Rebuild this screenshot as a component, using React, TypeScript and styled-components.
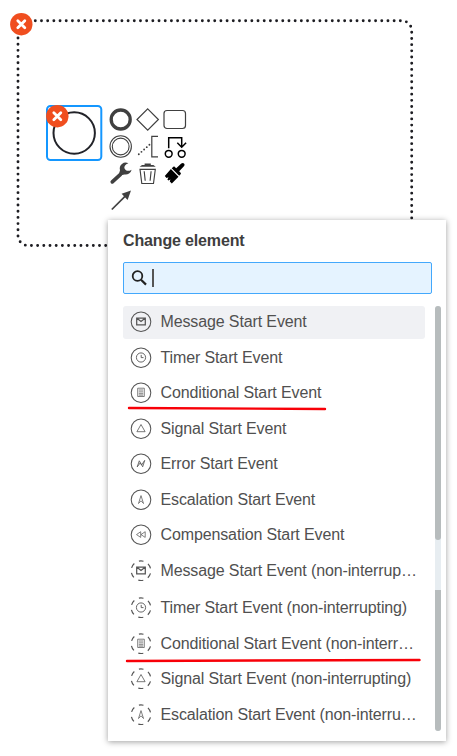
import React from "react";
import styled, { createGlobalStyle } from "styled-components";

const GlobalStyle = createGlobalStyle`
  * { box-sizing: border-box; }
  body { margin: 0; background: #fff; font-family: "Liberation Sans", Arial, sans-serif; overflow: hidden; }
`;

const Canvas = styled.main`
  position: relative;
  width: 457px;
  height: 756px;
  background: #fff;
  overflow: hidden;
`;

const Diagram = styled.svg`
  position: absolute;
  inset: 0;
`;

const ContextPad = styled.div`
  position: absolute;
  left: 107px;
  top: 106px;
  display: grid;
  grid-template-columns: repeat(3, 27px);
  grid-auto-rows: 27px;
`;

const PadIcon = styled.svg`
  display: block;
  width: 27px;
  height: 27px;
  overflow: visible;
  fill: none;
  stroke: #404040;
  stroke-width: 1.2;
`;

const Menu = styled.section`
  position: absolute;
  left: 108px;
  top: 220px;
  width: 338px;
  height: 521px;
  padding: 11px 5px 10px 15px;
  display: flex;
  flex-direction: column;
  background: #fff;
  box-shadow: 0 1px 6px rgba(0, 0, 0, 0.38);
`;

const Title = styled.h1`
  margin: 0;
  height: 31px;
  font-size: 16px;
  line-height: 20px;
  letter-spacing: -0.15px;
  color: #3e3e3e;
`;

const Search = styled.div`
  width: 309px;
  height: 32px;
  display: flex;
  align-items: center;
  padding-left: 7px;
  gap: 4px;
  border: 1px solid #43a8fc;
  border-radius: 2px;
  background: #e5f3ff;
`;

const SearchIcon = styled.svg`
  width: 17px;
  height: 18px;
`;

const Caret = styled.span`
  width: 1.5px;
  height: 18px;
  background: #555;
`;

const Body = styled.div`
  display: flex;
  justify-content: space-between;
  margin-top: 12px;
  height: 425px;
`;

const List = styled.ul`
  list-style: none;
  margin: 0;
  padding: 0;
  width: 302px;
`;

const Row = styled.li<{ $active?: boolean; $height: number }>`
  position: relative;
  height: ${(p) => p.$height}px;
  &::before {
    content: "";
    position: absolute;
    inset: 0 0 auto;
    height: 33px;
    border-radius: 3px;
    background: ${(p) => (p.$active ? "#f0f1f4" : "transparent")};
  }
`;

const RowContent = styled.div`
  position: relative;
  height: 31px;
  display: flex;
  align-items: center;
  gap: 8.5px;
  padding-left: 7px;
`;

const EventSvg = styled.svg`
  flex: none;
  width: 22px;
  height: 22px;
  fill: none;
  stroke: #555;
  stroke-width: 1;
`;

const Label = styled.span`
  white-space: nowrap;
  font-size: 16px;
  line-height: 22px;
  letter-spacing: -0.125px;
  color: #505050;
`;

const Underline = styled.svg<{ $left: number }>`
  position: absolute;
  left: ${(p) => p.$left}px;
  top: 29px;
  width: 300px;
  height: 6px;
  overflow: visible;
  z-index: 1;
`;

const Scrollbar = styled.div`
  width: 6px;
  display: flex;
  flex-direction: column;
  justify-content: space-between;
  background: #e7edf1;
  border-radius: 3px;
`;

const Thumb = styled.div<{ $height: number; $radius: string }>`
  height: ${(p) => p.$height}px;
  border-radius: ${(p) => p.$radius};
  background: #b7bcbd;
`;

type Kind = "message" | "timer" | "condition" | "signal" | "error" | "escalation" | "compensation";

const glyphs: Record<Kind, React.ReactNode> = {
  message: <path d="M6.7 7.3h8.6v6.8H6.7zM6.9 7.6 11 10.8l4.1-3.2" strokeWidth="1.25" />,
  timer: (
    <>
      <circle cx="11" cy="10.8" r="4.6" strokeWidth="0.9" />
      <path d="M11.2 8.2v2.7h2.3" strokeWidth="0.9" />
    </>
  ),
  condition: <path d="M7.7 6.5h6.6v8.3H7.7zM8.8 8.3h4.4M8.8 10.2h4.4M8.8 12h4.4M8.8 13.4h4.4" strokeWidth="0.75" />,
  signal: <path d="m11 6.8 4.1 7.2H6.9z" strokeWidth="0.8" />,
  error: <path d="m7.2 14.2 2.1-6.1 2.3 4.2 3.1-4.6-2 6.4-2.4-4z" strokeWidth="0.85" />,
  escalation: <path d="m11 6.9 2.5 7.9-2.5-2.7-2.5 2.7z" strokeWidth="0.75" />,
  compensation: <path d="m10.7 8-4.2 2.9 4.2 2.8zM15.2 8 11 10.9l4.2 2.8z" strokeWidth="0.75" />,
};

const EventIcon = ({ kind, dashed }: { kind: Kind; dashed?: boolean }) => (
  <EventSvg viewBox="0 0.3 22 22">
    <circle
      cx="11"
      cy="11"
      r="9.8"
      strokeWidth={dashed ? 1.2 : 1.05}
      strokeDasharray={dashed ? "5.1 5.163" : undefined}
      strokeDashoffset={dashed ? 2.55 : undefined}
      transform="rotate(-90 11 11)"
    />
    {glyphs[kind]}
  </EventSvg>
);

const ErrorBadge = ({ x, y }: { x: number; y: number }) => (
  <g transform={`translate(${x} ${y})`}>
    <circle r="11.2" fill="#f04e1f" />
    <path d="m-3.5-3.5 7 7m0-7-7 7" stroke="#fff" strokeWidth="2.8" strokeLinecap="round" />
  </g>
);

interface Item {
  kind: Kind;
  text: string;
  height: number;
  dashed?: boolean;
  active?: boolean;
  mark?: { left: number; width: number; y1: number; y2: number };
}

const items: Item[] = [
  { kind: "message", text: "Message Start Event", height: 36, active: true },
  { kind: "timer", text: "Timer Start Event", height: 35 },
  { kind: "condition", text: "Conditional Start Event", height: 36, mark: { left: 5, width: 197, y1: 2, y2: 3 } },
  { kind: "signal", text: "Signal Start Event", height: 35 },
  { kind: "error", text: "Error Start Event", height: 36 },
  { kind: "escalation", text: "Escalation Start Event", height: 35 },
  { kind: "compensation", text: "Compensation Start Event", height: 36 },
  { kind: "message", text: "Message Start Event (non-interrup…", height: 37, dashed: true },
  { kind: "timer", text: "Timer Start Event (non-interrupting)", height: 36, dashed: true },
  { kind: "condition", text: "Conditional Start Event (non-interr…", height: 35, dashed: true, mark: { left: 3, width: 293.5, y1: 4, y2: 3 } },
  { kind: "signal", text: "Signal Start Event (non-interrupting)", height: 36, dashed: true },
  { kind: "escalation", text: "Escalation Start Event (non-interru…", height: 33, dashed: true },
];

export default function App() {
  return (
    <Canvas>
      <GlobalStyle />
      <Diagram width="457" height="756" fill="none">
        <g stroke="#1d1d22" strokeWidth="2.9" strokeLinecap="round" strokeDasharray="0 6.187">
          <path d="M35.3 20.7H401.7a10 10 0 0 1 10 10V225" />
          <path d="M18 38V235.5a10 10 0 0 0 10 10H115" />
        </g>
        <rect x="47" y="106" width="54.3" height="54" rx="3.5" stroke="#1497ff" strokeWidth="2" />
        <circle cx="74.2" cy="133" r="20.7" stroke="#222329" strokeWidth="2" />
        <ErrorBadge x={21.3} y={24.2} />
        <ErrorBadge x={57.3} y={116.2} />
      </Diagram>
      <ContextPad>
        <PadIcon viewBox="0 0 27 27">
          <circle cx="13.7" cy="13.5" r="9.5" strokeWidth="3.3" />
        </PadIcon>
        <PadIcon viewBox="0 0 27 27">
          <path d="m13.7 2.8 10.7 10.7-10.7 10.7L3 13.5z" />
        </PadIcon>
        <PadIcon viewBox="0 0 27 27">
          <rect x="3" y="4.5" width="21.5" height="18" rx="3" />
        </PadIcon>
        <PadIcon viewBox="0 0 27 27">
          <circle cx="13.7" cy="13.5" r="10.7" strokeWidth="1.1" />
          <circle cx="13.7" cy="13.5" r="8.4" strokeWidth="1.1" />
        </PadIcon>
        <PadIcon viewBox="0 0 27 27">
          <path d="M24 3.3h-6.2v20.6H24" />
          <path d="m4.8 21.2 10.7-9.5" strokeWidth="1.9" strokeLinecap="round" strokeDasharray="0 3.55" />
        </PadIcon>
        <PadIcon viewBox="0 0 27 27">
          <g stroke="#000" strokeWidth="1.5">
            <circle cx="7.7" cy="20.8" r="3.4" />
            <circle cx="20.7" cy="20.8" r="3.4" />
            <path d="M7.7 15.2V4.7h13v9.3m-4.4-4.2 4.4 4.4 4.4-4.4" />
          </g>
        </PadIcon>
        <PadIcon viewBox="0 0 27 27">
          <path d="m5.3 21.9 8.2-7.6" strokeWidth="3.7" strokeLinecap="round" />
          <path d="M21.4 3.2a6 6 0 0 0-8.4 7l-.8 3.1 1.8 2 3.5-.9a6 6 0 0 0 7.1-4.7c-3.1 2-6 1.2-6.9-.9-1-2.2.5-4.5 3.7-5.6z" fill="#404040" stroke="none" />
        </PadIcon>
        <PadIcon viewBox="0 0 27 27">
          <path d="M5.7 6.8 8 4.9h2.6V3.5h6.2v1.4h2.6l2.3 1.9z" fill="#404040" stroke="none" />
          <path d="M6 9.3h15.3l-1.8 14.2H7.8zM10.2 11.3l1 9.5m5.9-9.5-1 9.5" strokeWidth="1.15" />
        </PadIcon>
        <PadIcon viewBox="0 0 27 27">
          <g fill="#000" stroke="none">
            <path d="M12.2 6.9c.6-.5 1.1-.5 1.6 0l1.4 1.4 5.1-4.7c1-1 2-.9 2.7-.1.8.8.8 1.8-.1 2.7l-4.7 5.1 1.4 1.4c.5.5.5 1 0 1.6l-1.4 1.5-7.5-7.5z" />
            <path d="m9.9 9.1 7.6 7.6-6.7 6.8-2-2.1.6-2-2 1.1-1-1.1 1.1-2.1-2 .6-1.7-1.9z" />
          </g>
        </PadIcon>
        <PadIcon viewBox="0 0 27 27">
          <path d="M4.8 22.5 18.5 8.8" strokeWidth="1.7" />
          <path d="m24 3.4-3.4 9.5-6-6.1z" fill="#404040" stroke="none" />
        </PadIcon>
      </ContextPad>
      <Menu>
        <Title>Change element</Title>
        <Search>
          <SearchIcon viewBox="0 0 17 18" fill="none" stroke="#222">
            <circle cx="6.5" cy="7" r="4.8" strokeWidth="1.8" />
            <path d="m10 10.7 5 4.9" strokeWidth="2.2" />
          </SearchIcon>
          <Caret />
        </Search>
        <Body>
          <List>
            {items.map((item) => (
              <Row key={item.text} $active={item.active} $height={item.height}>
                <RowContent>
                  <EventIcon kind={item.kind} dashed={item.dashed} />
                  <Label>{item.text}</Label>
                </RowContent>
                {item.mark && (
                  <Underline $left={item.mark.left}>
                    <path
                      d={`M1 ${item.mark.y1}L${item.mark.width} ${item.mark.y2}`}
                      stroke="#f80008"
                      strokeWidth="2.4"
                      strokeLinecap="round"
                    />
                  </Underline>
                )}
              </Row>
            ))}
          </List>
          <Scrollbar>
            <Thumb $height={234} $radius="3px" />
            <Thumb $height={141} $radius="0 0 3px 3px" />
          </Scrollbar>
        </Body>
      </Menu>
    </Canvas>
  );
}
